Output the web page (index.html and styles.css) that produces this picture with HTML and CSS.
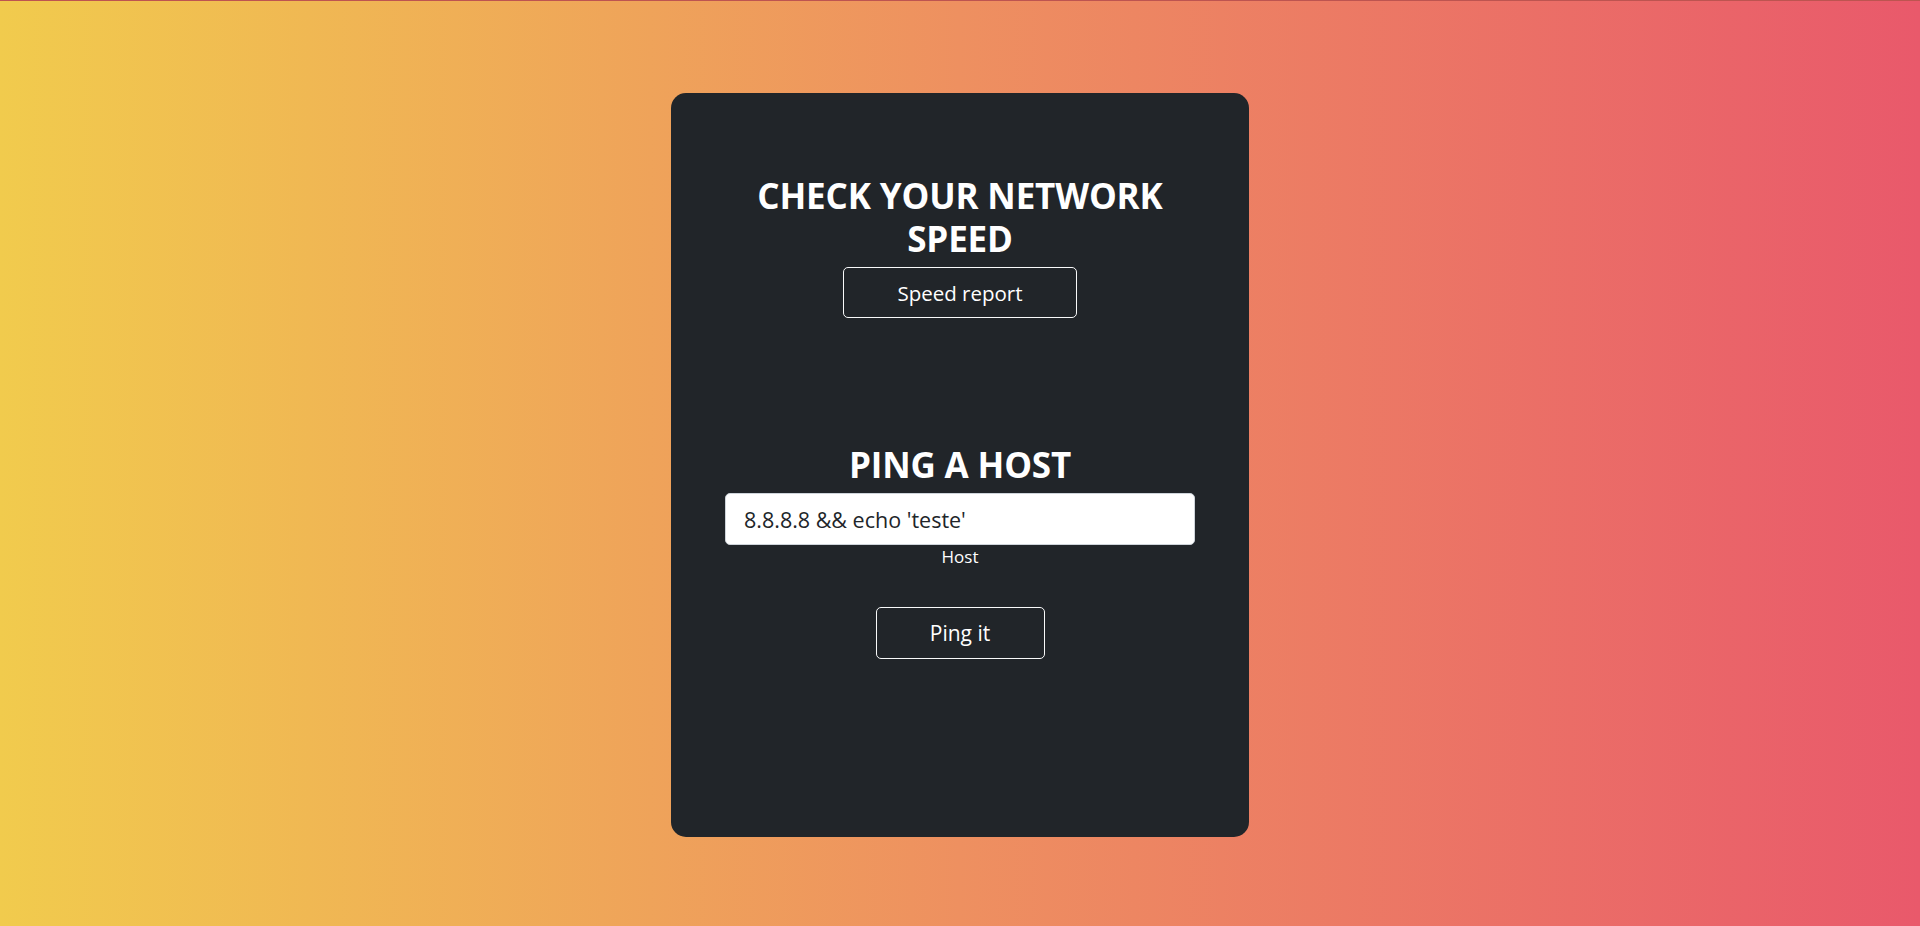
FILE: index.html
```html
<!DOCTYPE html>
<html lang="en">
<head>
<meta charset="utf-8">
<title>Network tools</title>
<link rel="stylesheet" href="styles.css">
</head>
<body>
<div class="page">
  <main class="card">
    <section class="block speed">
      <h2 class="title">CHECK YOUR NETWORK<br>SPEED</h2>
      <button class="btn btn-speed" type="button">Speed report</button>
    </section>
    <section class="block ping">
      <h2 class="title">PING A HOST</h2>
      <input class="host-input" type="text" value="8.8.8.8 &amp;&amp; echo 'teste'">
      <label class="host-label">Host</label>
      <button class="btn btn-ping" type="button">Ping it</button>
    </section>
  </main>
</div>
</body>
</html>
```
FILE: styles.css
```css
* { box-sizing: border-box; }
html, body { margin: 0; padding: 0; }
body {
  font-family: "Open Sans", "Noto Sans", sans-serif;
  color: #fff;
}
.page {
  height: 926px;
  overflow: hidden;
  background: linear-gradient(90deg, #f1cb4d 0%, #ee9060 50%, #e9596b 100%);
  border-top: 1px solid #bd5450;
  padding-top: 92px;
  display: flex;
  justify-content: center;
  align-items: flex-start;
}
.card {
  width: 578px;
  height: 744px;
  background: #212529;
  border-radius: 15px;
  padding-top: 79px;
  display: flex;
  flex-direction: column;
  align-items: center;
}
.block {
  display: flex;
  flex-direction: column;
  align-items: center;
  width: 100%;
}
.ping { margin-top: 123px; }
.title {
  margin: 0 0 7px;
  padding-top: 2px;
  font-size: 35px;
  line-height: 43px;
  font-weight: 700;
  text-align: center;
  letter-spacing: -0.15px;
}
.btn {
  background: transparent;
  color: #fff;
  border: 1px solid #f8f9fa;
  border-radius: 5px;
  font-family: "Open Sans", "Noto Sans", sans-serif;
  font-size: 20.5px;
  padding: 0;
  height: 51px;
}
.btn-speed { width: 234px; }
.btn-ping { width: 169px; height: 52px; margin-top: 38px; font-size: 21px; }
.host-input {
  width: 470px;
  height: 52px;
  border: 1px solid #ced4da;
  border-radius: 5px;
  background: #fff;
  color: #212529;
  font-family: "Open Sans", "Noto Sans", sans-serif;
  font-size: 21.5px;
  padding: 0 18px;
  outline: none;
}
.host-label {
  font-size: 17px;
  line-height: 24px;
  text-align: center;
}
```
